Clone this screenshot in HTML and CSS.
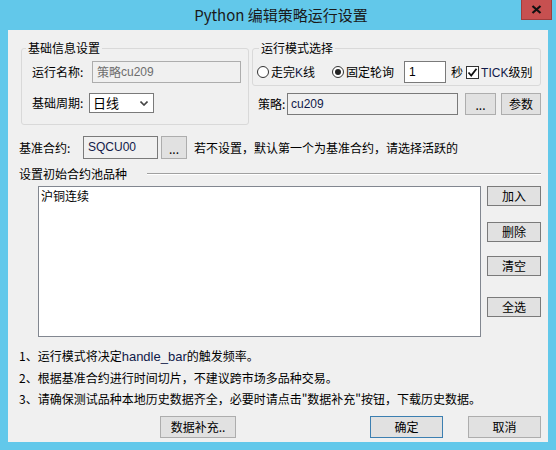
FILE: index.html
```html
<!DOCTYPE html>
<html lang="zh-CN">
<head>
<meta charset="utf-8">
<title>Python 编辑策略运行设置</title>
<link rel="stylesheet" href="styles.css">
</head>
<body>
<div class="window">
  <div class="titlebar">
    <div class="title">Python 编辑策略运行设置</div>
    <div class="close">
      <svg width="11" height="9" viewBox="0 0 11 9"><path d="M1.5 1 L9.5 8 M9.5 1 L1.5 8" stroke="#111" stroke-width="2.2" fill="none"/></svg>
    </div>
  </div>
  <div class="client">
    <div class="top">
      <fieldset class="group g1">
        <legend>基础信息设置</legend>
        <div class="row r-name">
          <span class="lbl">运行名称:</span>
          <div class="field ro name-field">策略<span class="lat">cu209</span></div>
        </div>
        <div class="row r-period">
          <span class="lbl">基础周期:</span>
          <div class="select">日线
            <svg class="chev" width="8" height="5" viewBox="0 0 8 5"><path d="M0.5 0.5 L4 4 L7.5 0.5" stroke="#444" stroke-width="1.6" fill="none"/></svg>
          </div>
        </div>
      </fieldset>
      <div class="right">
        <fieldset class="group g2">
          <legend>运行模式选择</legend>
          <div class="row mode">
            <span class="radio"></span><span class="opt">走完<span class="lat">K</span>线</span>
            <span class="radio checked"></span><span class="opt">固定轮询</span>
            <div class="field secs">1</div>
            <span class="unit">秒</span>
            <span class="check"><svg width="11" height="11" viewBox="0 0 11 11"><path d="M1.5 5.5 L4.2 8.5 L9.5 1.8" stroke="#111" stroke-width="1.8" fill="none"/></svg></span>
            <span class="opt tick"><span class="lat">TICK</span>级别</span>
          </div>
        </fieldset>
        <div class="row strat">
          <span class="lbl">策略:</span>
          <div class="field strat-field"><span class="lat">cu209</span></div>
          <button class="btn dots">...</button>
          <button class="btn params">参数</button>
        </div>
      </div>
    </div>

    <div class="row base">
      <span class="lbl">基准合约:</span>
      <div class="field base-field"><span class="lat">SQCU00</span></div>
      <button class="btn dots small">...</button>
      <span class="hint">若不设置，默认第一个为基准合约，请选择活跃的</span>
    </div>

    <div class="section">
      <span class="section-title">设置初始合约池品种</span>
      <span class="rule"></span>
    </div>

    <div class="pool">
      <div class="list">沪铜连续</div>
      <div class="side">
        <button class="btn side-btn add">加入</button>
        <button class="btn side-btn del">删除</button>
        <button class="btn side-btn clear">清空</button>
        <button class="btn side-btn all">全选</button>
      </div>
    </div>

    <div class="notes">
      <p>1、运行模式将决定<span class="lat">handle_bar</span>的触发频率。</p>
      <p>2、根据基准合约进行时间切片，不建议跨市场多品种交易。</p>
      <p>3、请确保测试品种本地历史数据齐全，必要时请点击"数据补充"按钮，下载历史数据。</p>
    </div>

    <div class="actions">
      <button class="btn act fill">数据补充..</button>
      <button class="btn act ok">确定</button>
      <button class="btn act cancel">取消</button>
    </div>
  </div>
</div>
</body>
</html>
```

FILE: styles.css
```css
html, body {
  margin: 0;
  padding: 0;
  background: #ffffff;
}

body {
  font-family: "Noto Sans CJK SC", "Liberation Sans", sans-serif;
  font-size: 12px;
  line-height: 16px;
  color: #000;
}

.window {
  width: 556px;
  height: 450px;
  background: #62c8ea;
  display: flex;
  flex-direction: column;
  box-sizing: border-box;
}

.titlebar {
  height: 30px;
  position: relative;
  display: flex;
  justify-content: center;
  align-items: center;
  flex: none;
}

.title {
  font-size: 15px;
  line-height: 18px;
  color: #1a1a1a;
  margin-top: -1px;
  margin-left: 6px;
}

.close {
  position: absolute;
  top: 0;
  right: 4px;
  width: 31px;
  height: 20px;
  box-sizing: border-box;
  background: #c75050;
  border: 1px solid #9e3d3d;
  border-top: none;
  display: flex;
  align-items: center;
  justify-content: center;
}

.client {
  flex: 1;
  margin: 0 8px 8px 8px;
  background: #f0f0f0;
  padding: 10px 7px 0 13px;
  box-sizing: border-box;
}

.top {
  display: flex;
  align-items: flex-start;
}

.group {
  margin: 0;
  padding: 0;
  border: 1px solid #d9d9d9;
  border-radius: 3px;
  min-width: 0;
  box-sizing: border-box;
}

.group legend {
  padding: 0 2px;
  margin-left: 4px;
  line-height: 16px;
}

.row {
  display: flex;
  align-items: center;
  white-space: nowrap;
}

.row > * {
  flex: none;
}

.field {
  box-sizing: border-box;
  border: 1px solid #7a7a7a;
  background: #fff;
  padding: 0 3px;
  display: flex;
  align-items: center;
  white-space: nowrap;
}

.lat {
  font-family: "Liberation Sans", sans-serif;
  color: #101a4a;
}

/* group 1 */
.g1 {
  width: 228px;
  padding-bottom: 11px;
}

.r-name {
  margin-top: 5px;
}

.r-name .lbl,
.r-period .lbl {
  margin-left: 10px;
  width: 55px;
}

.name-field {
  margin-left: 5px;
  width: 149px;
  height: 22px;
  background: #f0f0f0;
  border-color: #adadad;
  color: #6d6d6d;
  padding-left: 4px;
}

.name-field .lat {
  color: #6d6d6d;
}

.r-period {
  margin-top: 10px;
}

.select {
  margin-left: 2px;
  width: 65px;
  height: 20px;
  box-sizing: border-box;
  border: 1px solid #7a7a7a;
  background: #fff;
  display: flex;
  align-items: center;
  padding-left: 3px;
  font-size: 13px;
}

.chev {
  margin-left: auto;
  margin-right: 5px;
}

/* right column */
.right {
  margin-left: 3px;
  width: 289px;
}

.g2 {
  width: 289px;
  padding-bottom: 2px;
}

.g2 legend {
  margin-left: 6px;
}

.mode {
  margin-top: 5px;
}

.radio {
  width: 12px;
  height: 12px;
  box-sizing: border-box;
  border: 1px solid #333;
  border-radius: 50%;
  background: #fff;
  margin-left: 4px;
  display: flex;
  align-items: center;
  justify-content: center;
}

.radio.checked {
  margin-left: 17px;
}

.radio.checked::after {
  content: "";
  width: 6px;
  height: 6px;
  border-radius: 50%;
  background: #222;
}

.opt {
  margin-left: 2px;
}

.secs {
  margin-left: 10px;
  width: 42px;
  height: 22px;
  padding-left: 4px;
  font-family: "Liberation Sans", sans-serif;
}

.unit {
  margin-left: 5px;
}

.check {
  margin-left: 3px;
  width: 13px;
  height: 13px;
  box-sizing: border-box;
  border: 1px solid #333;
  background: #fff;
  display: flex;
  align-items: center;
  justify-content: center;
}

.tick {
  margin-left: 2px;
}

.strat {
  margin-top: 7px;
}

.strat .lbl {
  margin-left: 6px;
  width: 29px;
}

.strat-field {
  width: 171px;
  height: 22px;
  background: #f0f0f0;
}

.btn {
  font-family: "Noto Sans CJK SC", "Liberation Sans", sans-serif;
  font-size: 12px;
  line-height: 16px;
  color: #000;
  background: #e1e1e1;
  border: 1px solid #adadad;
  border-radius: 0;
  padding: 0;
  margin: 0;
  box-sizing: border-box;
}

.dots {
  margin-left: 7px;
  width: 31px;
  height: 22px;
  padding-top: 2px;
}

.params {
  margin-left: 5px;
  width: 40px;
  height: 22px;
}

/* base contract */
.base {
  margin-top: 11px;
  margin-left: -2px;
}

.base .lbl {
  width: 64px;
}

.base-field {
  width: 75px;
  height: 23px;
  background: #f0f0f0;
  padding-left: 4px;
  align-items: flex-start;
  padding-top: 2px;
}

.dots.small {
  margin-left: 3px;
  width: 26px;
  height: 23px;
}

.hint {
  margin-left: 7px;
}

/* section header */
.section {
  margin-top: 7px;
  margin-left: -2px;
  display: flex;
  align-items: center;
}

.rule {
  flex: 1;
  margin-left: 20px;
  height: 1px;
  background: #a0a0a0;
  border-bottom: 1px solid #fff;
}

/* pool */
.pool {
  margin-top: 4px;
  display: flex;
  align-items: flex-start;
}

.list {
  margin-left: 17px;
  width: 443px;
  height: 151px;
  box-sizing: border-box;
  border: 1px solid #828790;
  background: #fff;
  padding: 1px 2px;
}

.side {
  margin-left: 6px;
  display: flex;
  flex-direction: column;
}

.side-btn {
  width: 54px;
  height: 20px;
  border-color: #7a7a7a;
}

.del { margin-top: 16px; }
.clear { margin-top: 14px; }
.all { margin-top: 21px; }

/* notes */
.notes {
  margin-top: 8px;
  margin-left: -2px;
}

.notes p {
  margin: 0;
  line-height: 21px;
}

.notes .lat {
  font-size: 13px;
}

/* actions */
.actions {
  margin-top: 7px;
  display: flex;
}

.act {
  height: 22px;
  width: 73px;
}

.fill {
  margin-left: 139px;
  width: 76px;
}

.ok {
  margin-left: 134px;
  border-color: #3c7fb1;
}

.cancel {
  margin-left: 25px;
}
```
